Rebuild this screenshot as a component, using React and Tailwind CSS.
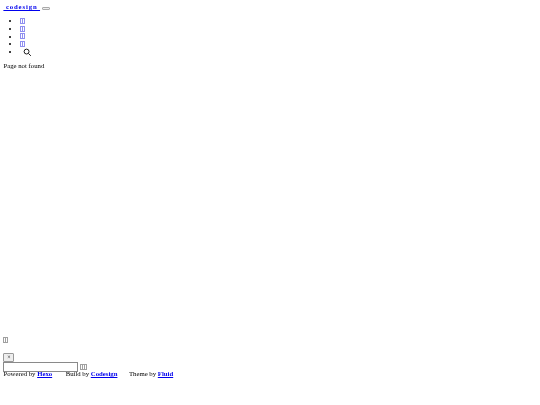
function Tofu({ count = 2, color = "border-[#a0a0a0]" }) {
  return (
    <span className="inline-flex -space-x-px align-[-0.5px]">
      {Array.from({ length: count }, (_, i) => (
        <span key={i} className={"inline-block h-[6px] w-[3px] border " + color}></span>
      ))}
    </span>
  );
}

function Link({ children }) {
  return <a href="#" className="font-bold text-[#0000ee] underline">{children}</a>;
}

export default function App() {
  return (
    <div className="min-h-[405px] bg-white px-[3.4px] pt-[3.4px] font-['Liberation_Serif',serif] text-[6.75px] leading-[7.6px] text-black blur-[0.4px]">
      <nav>
        <div className="flex items-center">
          <a href="#" className="text-[#0000ee] underline">
            <b className="tracking-[0.85px]">&nbsp;codesign&nbsp;</b>
          </a>
          <button className="ml-[2px] mt-[2px] h-[3px] w-[8px] rounded-[1px] border border-[#aaa] bg-[#eee]"></button>
        </div>
        <ul className="mt-[6.5px] list-disc pl-[17px]">
          {[0, 1, 2, 3].map((i) => (
            <li key={i}><a href="#" className="text-[#0000ee] underline"><Tofu color="border-[#8f8ff0]" /></a></li>
          ))}
          <li>
            <svg className="ml-[3px] inline-block align-top" width="9" height="9" viewBox="0 0 24 24" fill="none" stroke="#111" strokeWidth="2.5">
              <circle cx="9.5" cy="9.5" r="6.5" />
              <path d="M14.5 14.5 21 21" />
            </svg>
          </li>
        </ul>
      </nav>
      <p className="mt-[5px]">Page not found</p>
      <div className="mt-[267px]"><Tofu /></div>
      <div className="mt-[9px]">
        <button className="flex h-[9px] w-[11px] items-center justify-center rounded-[1px] border border-[#999] bg-[#eee] text-[6px]">×</button>
        <div className="flex items-center">
          <input className="h-[10px] w-[75px] border border-[#8a8a8a] bg-white" />
          <span className="ml-[2px]"><Tofu count={3} /></span>
        </div>
        <footer className="mt-[-2px] flex">
          <span>Powered by <Link>Hexo</Link></span>
          <span className="ml-[13.5px]">Build by <Link>Codesign</Link></span>
          <span className="ml-[11.5px]">Theme by <Link>Fluid</Link></span>
        </footer>
      </div>
    </div>
  );
}
